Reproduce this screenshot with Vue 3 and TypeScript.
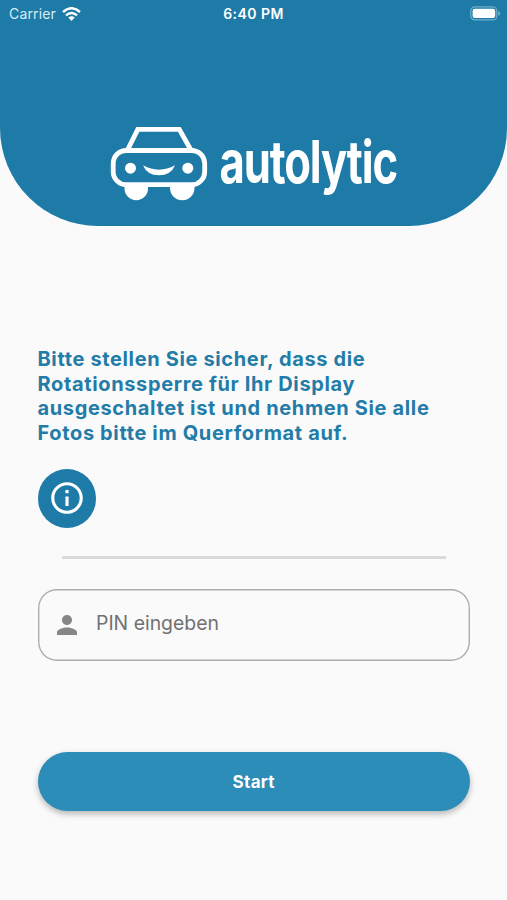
<script setup lang="ts">
import { ref } from 'vue'

const pin = ref<string>('')
const notice: string[] = [
  'Bitte stellen Sie sicher, dass die',
  'Rotationssperre für Ihr Display',
  'ausgeschaltet ist und nehmen Sie alle',
  'Fotos bitte im Querformat auf.',
]
</script>

<template>
  <div class="screen">
    <header class="hero">
      <div class="status">
        <div class="carrier">
          <span>Carrier</span>
          <svg class="wifi" viewBox="0 0 19 14" width="19" height="14">
            <path d="M1 5Q9.500-2.600 18 5" />
            <path d="M4 8.300Q9.500 3.600 15 8.300" />
            <path class="dot" d="M6.300 10.600Q9.500 8 12.700 10.600L9.500 13.900Z" />
          </svg>
        </div>
        <span class="time">6:40 PM</span>
        <svg class="battery" viewBox="0 0 31 15" width="31" height="15">
          <rect class="shell" x="0.800" y="0.900" width="26" height="13" rx="4" />
          <rect class="charge" x="2.600" y="2.800" width="22.600" height="9.200" rx="2.200" />
          <path class="cap" d="M28.200 5V9.800Q30.200 8.800 30.200 7.400T28.200 5Z" />
        </svg>
      </div>
      <svg class="logo" viewBox="0 0 290 80" width="290" height="80">
        <g class="car">
          <path d="M17 26L27.800 4.400H69.300L81.500 26" />
          <rect x="3.200" y="25.500" width="91.500" height="34.200" rx="13" />
        </g>
        <g class="fill">
          <path d="M14.500 60H38V63.400A11.700 11.700 0 0 1 14.500 63.400Z" />
          <path d="M60 60H84.500V63A12.200 12.200 0 0 1 60 63Z" />
          <circle cx="20.500" cy="43.200" r="5.500" />
          <circle cx="77.800" cy="43.200" r="5.500" />
          <path d="M33 40.300Q49 49 65 40.300Q61 50.300 49 50.300T33 40.300Z" />
        </g>
        <text class="brand" x="109.500" y="57.500" textLength="177.500" lengthAdjust="spacingAndGlyphs">autolytic</text>
      </svg>
    </header>

    <main class="content">
      <p class="notice"><span v-for="line in notice" :key="line">{{ line }}</span></p>
      <button class="info" type="button" aria-label="Info">
        <svg viewBox="0 0 24 24" width="38" height="38">
          <path d="M11 7h2v2h-2zm0 4h2v6h-2zm1-9C6.480 2 2 6.480 2 12s4.480 10 10 10 10-4.480 10-10S17.520 2 12 2zm0 18c-4.410 0-8-3.590-8-8s3.590-8 8-8 8 3.590 8 8-3.590 8-8 8z" />
        </svg>
      </button>
      <div class="divider"></div>
      <label class="field">
        <svg viewBox="0 0 24 24" width="30" height="30">
          <path d="M12 12c2.210 0 4-1.790 4-4s-1.790-4-4-4-4 1.790-4 4 1.790 4 4 4zm0 2c-2.670 0-8 1.340-8 4v2h16v-2c0-2.660-5.330-4-8-4z" />
        </svg>
        <input v-model="pin" type="text" placeholder="PIN eingeben" />
      </label>
      <button class="start" type="button">Start</button>
    </main>
  </div>
</template>

<style>
body {
  background: #fafafa;
}
</style>

<style scoped>
.screen {
  height: 900px;
  overflow: hidden;
  background: #fafafa;
  font-family: Inter, Roboto, sans-serif;
}
.hero {
  box-sizing: border-box;
  height: 226px;
  background: #1e7ba8;
  border-radius: 0 0 98px 98px;
}
.status {
  display: grid;
  grid-template-columns: 1fr auto 1fr;
  align-items: center;
  height: 27px;
  padding: 0 6px 0 9px;
  color: #fff;
}
.carrier {
  display: flex;
  align-items: center;
  gap: 6px;
  font-size: 14px;
  letter-spacing: 0.150px;
  color: #d8edf5;
}
.wifi path {
  fill: none;
  stroke: #fff;
  stroke-width: 2.400;
}
.wifi .dot {
  fill: #fff;
  stroke: none;
}
.time {
  margin-left: -3px;
  font-size: 14px;
  font-weight: 600;
  letter-spacing: 0.450px;
}
.battery {
  justify-self: end;
}
.shell {
  fill: none;
  stroke: #72afcb;
  stroke-width: 1.200;
}
.charge {
  fill: #fff;
}
.cap {
  fill: #72afcb;
}
.logo {
  display: block;
  overflow: visible;
  margin: 97.500px 0 0 109.500px;
}
.car {
  fill: none;
  stroke: #fff;
  stroke-width: 4.800;
}
.fill,
.brand {
  fill: #fff;
}
.brand {
  font-size: 59px;
  font-weight: 700;
  letter-spacing: -1.500px;
}
.content {
  display: flex;
  flex-direction: column;
  align-items: flex-start;
  padding: 121px 37px 0 37.500px;
}
.notice {
  margin: 0;
  color: #237ca8;
  font-size: 20px;
  font-weight: 650;
  line-height: 24.500px;
  letter-spacing: 0.640px;
}
.notice span {
  display: block;
  white-space: nowrap;
}
.info {
  display: flex;
  align-items: center;
  justify-content: center;
  width: 58.500px;
  height: 58.500px;
  margin: 24px 0 0;
  padding: 0;
  border: 0;
  border-radius: 50%;
  background: #1e7ba8;
}
.info path {
  fill: #fff;
}
.divider {
  align-self: stretch;
  height: 3px;
  margin: 28.500px 24px 0 24.500px;
  background: #dadada;
}
.field {
  box-sizing: border-box;
  display: flex;
  align-items: center;
  align-self: stretch;
  gap: 14px;
  height: 72px;
  margin-top: 29.500px;
  padding-left: 14.500px;
  box-shadow: inset 0 0 0 1.400px #adadad;
  border-radius: 19px;
}
.field path {
  fill: #868686;
}
.field input {
  flex: 1;
  min-width: 0;
  padding: 0 0 3px;
  border: 0;
  outline: 0;
  background: transparent;
  font: 400 19.400px Inter, Roboto, sans-serif;
}
.field input::placeholder {
  color: #717171;
  opacity: 1;
}
.start {
  align-self: stretch;
  height: 58.500px;
  margin-top: 91.500px;
  padding: 1px 0 0;
  border: 0;
  border-radius: 30px;
  background: #2b8db8;
  box-shadow: 0 3px 6px rgba(0, 0, 0, 0.28);
  color: #fff;
  font: 700 17px Inter, Roboto, sans-serif;
  letter-spacing: 0.300px;
}
</style>
